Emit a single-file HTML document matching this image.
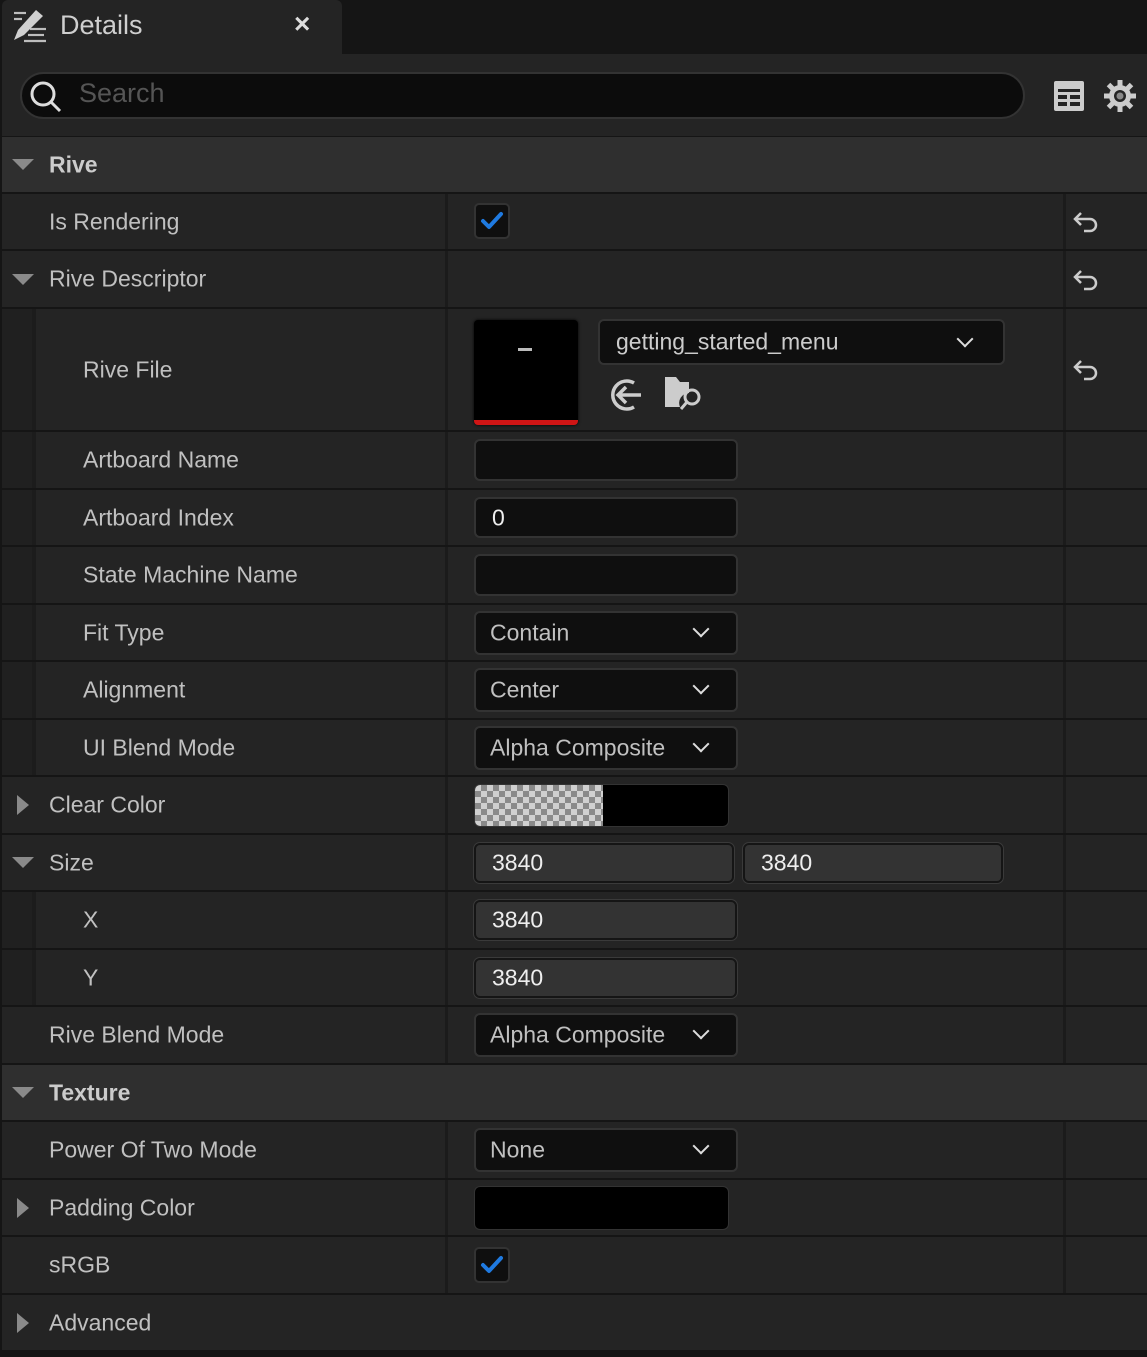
<!DOCTYPE html>
<html><head><meta charset="utf-8"><style>
*{box-sizing:border-box;margin:0;padding:0}
body{width:1147px;height:1357px;background:#151515;position:relative;overflow:hidden;font-family:"Liberation Sans",sans-serif;color:#c0c0c0;font-size:23px}
.a{position:absolute}
.row{position:absolute;left:2px;width:1145px;background:#242424}
.hdr{background:#2f2f2f}
.lbl{position:absolute;top:50%;transform:translateY(-50%);white-space:nowrap}
.c1{position:absolute;left:443px;top:0;bottom:0;width:3px;background:#1b1b1b}
.c2{position:absolute;left:1061px;top:0;bottom:0;width:3px;background:#1b1b1b}
.ind{position:absolute;left:0;top:0;bottom:0;width:34px;background:#202020;border-right:4px solid #1c1c1c}
.box{position:absolute;background:#0f0f0f;border:2px solid #333;border-radius:6px}
.num{position:absolute;background:#333;border:2px solid #151515;border-radius:6px;box-shadow:0 0 0 1px #3a3a3a;color:#eee}
.tri-d{position:absolute;width:0;height:0;border-left:11px solid transparent;border-right:11px solid transparent;border-top:11px solid #8a8a8a}
.tri-r{position:absolute;width:0;height:0;border-top:10px solid transparent;border-bottom:10px solid transparent;border-left:12px solid #8a8a8a}
.chev{position:absolute;width:12px;height:12px;border-right:2.5px solid #ddd;border-bottom:2.5px solid #ddd;transform:rotate(45deg)}
.chk{position:absolute;width:36px;height:36px;background:#0f0f0f;border:2px solid #333;border-radius:5px}
</style></head><body>

<div class="a" style="left:2px;top:0;width:340px;height:54px;background:#242424;border-radius:6px 6px 0 0"></div>
<svg class="a" style="left:12px;top:9px" width="36" height="34" viewBox="0 0 36 34">
<g stroke="#bdbdbd" stroke-width="2.2" fill="none"><line x1="2" y1="4" x2="14" y2="4"/><line x1="2" y1="10" x2="10" y2="10"/><line x1="18" y1="20" x2="34" y2="20"/><line x1="16" y1="26" x2="32" y2="26"/><line x1="12" y1="32" x2="34" y2="32"/></g>
<path d="M24 1 L31 7 L12 26 L2 31 L6 21 Z" fill="#d0d0d0"/></svg>
<div class="a" style="left:60px;top:10px;font-size:27px;color:#cfcfcf">Details</div>
<div class="a" style="left:294px;top:8px;font-size:28px;color:#ddd;font-weight:bold">×</div>

<div class="a" style="left:2px;top:54px;width:1145px;height:82px;background:#242424"></div>
<div class="a" style="left:20px;top:72px;width:1005px;height:47px;background:#0c0c0c;border:2px solid #333;border-radius:24px"></div>
<svg class="a" style="left:28px;top:79px" width="36" height="36" viewBox="0 0 36 36"><circle cx="15" cy="15" r="11" stroke="#ddd" stroke-width="3" fill="none"/><line x1="23" y1="23" x2="32" y2="32" stroke="#ddd" stroke-width="3"/></svg>
<div class="a" style="left:79px;top:78px;font-size:27px;color:#555">Search</div>
<svg class="a" style="left:1053px;top:80px" width="32" height="32" viewBox="0 0 32 32"><rect x="1" y="1" width="30" height="30" rx="2" fill="#ccc"/><rect x="5" y="9" width="22" height="3" fill="#242424"/><rect x="5" y="15" width="9" height="4" fill="#242424"/><rect x="17" y="15" width="10" height="4" fill="#242424"/><rect x="5" y="22" width="9" height="4" fill="#242424"/><rect x="17" y="22" width="10" height="4" fill="#242424"/></svg>
<svg class="a" style="left:1102px;top:78px" width="36" height="36" viewBox="0 0 36 36"><g fill="#ccc"><circle cx="18" cy="18" r="11"/><g stroke="#ccc" stroke-width="5"><line x1="18" y1="2" x2="18" y2="34"/><line x1="2" y1="18" x2="34" y2="18"/><line x1="6.5" y1="6.5" x2="29.5" y2="29.5"/><line x1="29.5" y1="6.5" x2="6.5" y2="29.5"/></g></g><circle cx="18" cy="18" r="6" fill="#242424"/><circle cx="18" cy="18" r="3.5" fill="#888"/></svg>

<div class="row hdr" style="top:137px;height:55px"><div class="tri-d" style="left:10px;top:22px"></div><div class="lbl" style="left:47px;font-weight:bold;color:#ccc">Rive</div></div>

<div class="row" style="top:194px;height:55px"><div class="lbl" style="left:47px">Is Rendering</div><div class="c1"></div><div class="c2"></div>
<div class="chk" style="left:472px;top:9px"><svg width="32" height="32" viewBox="0 0 32 32"><path d="M7 16 L13 22 L25 9" stroke="#1f7ae0" stroke-width="4" fill="none" stroke-linecap="round" stroke-linejoin="round"/></svg></div></div>

<div class="row" style="top:251px;height:56px"><div class="tri-d" style="left:10px;top:23px"></div><div class="lbl" style="left:47px">Rive Descriptor</div><div class="c1"></div><div class="c2"></div></div>

<div class="row" style="top:309px;height:121px"><div class="ind"></div><div class="lbl" style="left:81px">Rive File</div><div class="c1"></div><div class="c2"></div>
<div class="a" style="left:472px;top:11px;width:104px;height:105px;background:#000;border-radius:4px;border-bottom:5px solid #d01515;box-shadow:0 0 3px #000"><div class="a" style="left:44px;top:28px;width:14px;height:3px;background:#bbb"></div></div>
<div class="box" style="left:596px;top:10px;width:407px;height:46px"><div class="lbl" style="left:16px;color:#ccc">getting_started_menu</div><div class="chev" style="left:359px;top:12px"></div></div>
<svg class="a" style="left:606px;top:68px" width="38" height="36" viewBox="0 0 38 36"><path d="M26 6 A14 14 0 1 0 26 30" stroke="#ccc" stroke-width="3.5" fill="none"/><path d="M10 18 H33 M18 10 L10 18 L18 26" stroke="#ccc" stroke-width="3.5" fill="none"/></svg>
<svg class="a" style="left:662px;top:66px" width="40" height="38" viewBox="0 0 40 38"><path d="M1 2 H12 L16 7 H25 V18 A10 10 0 0 0 16 32 H1 Z" fill="#ccc"/><circle cx="28" cy="22" r="7" stroke="#ccc" stroke-width="3" fill="none"/><line x1="23" y1="27" x2="17" y2="34" stroke="#ccc" stroke-width="3"/></svg>
</div>

<div class="row" style="top:432px;height:56px"><div class="ind"></div><div class="lbl" style="left:81px">Artboard Name</div><div class="c1"></div><div class="c2"></div><div class="box" style="left:472px;top:7px;width:264px;height:42px"></div></div>
<div class="row" style="top:490px;height:55px"><div class="ind"></div><div class="lbl" style="left:81px">Artboard Index</div><div class="c1"></div><div class="c2"></div><div class="box" style="left:472px;top:7px;width:264px;height:41px"><div class="lbl" style="left:16px;color:#eee">0</div></div></div>
<div class="row" style="top:547px;height:56px"><div class="ind"></div><div class="lbl" style="left:81px">State Machine Name</div><div class="c1"></div><div class="c2"></div><div class="box" style="left:472px;top:7px;width:264px;height:42px"></div></div>
<div class="row" style="top:605px;height:55px"><div class="ind"></div><div class="lbl" style="left:81px">Fit Type</div><div class="c1"></div><div class="c2"></div><div class="box" style="left:472px;top:6px;width:264px;height:44px"><div class="lbl" style="left:14px">Contain</div><div class="chev" style="left:219px;top:10px"></div></div></div>
<div class="row" style="top:662px;height:56px"><div class="ind"></div><div class="lbl" style="left:81px">Alignment</div><div class="c1"></div><div class="c2"></div><div class="box" style="left:472px;top:6px;width:264px;height:44px"><div class="lbl" style="left:14px">Center</div><div class="chev" style="left:219px;top:10px"></div></div></div>
<div class="row" style="top:720px;height:55px"><div class="ind"></div><div class="lbl" style="left:81px">UI Blend Mode</div><div class="c1"></div><div class="c2"></div><div class="box" style="left:472px;top:6px;width:264px;height:44px"><div class="lbl" style="left:14px">Alpha Composite</div><div class="chev" style="left:219px;top:10px"></div></div></div>

<div class="row" style="top:777px;height:56px"><div class="tri-r" style="left:15px;top:18px"></div><div class="lbl" style="left:47px">Clear Color</div><div class="c1"></div><div class="c2"></div>
<div class="a" style="left:472px;top:7px;width:255px;height:43px;border-radius:6px;overflow:hidden;background:#000;border:1px solid #333"><div class="a" style="left:0;top:0;width:128px;height:43px;background-color:#d0d0d0;background-image:linear-gradient(45deg,#8a8a8a 25%,transparent 25%,transparent 75%,#8a8a8a 75%),linear-gradient(45deg,#8a8a8a 25%,transparent 25%,transparent 75%,#8a8a8a 75%);background-size:12px 12px;background-position:0 0,6px 6px"></div></div></div>

<div class="row" style="top:835px;height:55px"><div class="tri-d" style="left:10px;top:22px"></div><div class="lbl" style="left:47px">Size</div><div class="c1"></div><div class="c2"></div>
<div class="num" style="left:472px;top:8px;width:260px;height:40px"><div class="lbl" style="left:16px">3840</div></div>
<div class="num" style="left:741px;top:8px;width:260px;height:40px"><div class="lbl" style="left:16px">3840</div></div></div>
<div class="row" style="top:892px;height:56px"><div class="ind"></div><div class="lbl" style="left:81px">X</div><div class="c1"></div><div class="c2"></div><div class="num" style="left:472px;top:8px;width:263px;height:40px"><div class="lbl" style="left:16px">3840</div></div></div>
<div class="row" style="top:950px;height:55px"><div class="ind"></div><div class="lbl" style="left:81px">Y</div><div class="c1"></div><div class="c2"></div><div class="num" style="left:472px;top:8px;width:263px;height:40px"><div class="lbl" style="left:16px">3840</div></div></div>
<div class="row" style="top:1007px;height:56px"><div class="lbl" style="left:47px">Rive Blend Mode</div><div class="c1"></div><div class="c2"></div><div class="box" style="left:472px;top:6px;width:264px;height:44px"><div class="lbl" style="left:14px">Alpha Composite</div><div class="chev" style="left:219px;top:10px"></div></div></div>

<div class="row hdr" style="top:1065px;height:55px"><div class="tri-d" style="left:10px;top:22px"></div><div class="lbl" style="left:47px;font-weight:bold;color:#ccc">Texture</div></div>

<div class="row" style="top:1122px;height:56px"><div class="lbl" style="left:47px">Power Of Two Mode</div><div class="c1"></div><div class="c2"></div><div class="box" style="left:472px;top:6px;width:264px;height:44px"><div class="lbl" style="left:14px">None</div><div class="chev" style="left:219px;top:10px"></div></div></div>
<div class="row" style="top:1180px;height:55px"><div class="tri-r" style="left:15px;top:18px"></div><div class="lbl" style="left:47px">Padding Color</div><div class="c1"></div><div class="c2"></div><div class="a" style="left:472px;top:6px;width:255px;height:44px;border-radius:6px;background:#000;border:1px solid #333"></div></div>
<div class="row" style="top:1237px;height:56px"><div class="lbl" style="left:47px">sRGB</div><div class="c1"></div><div class="c2"></div>
<div class="chk" style="left:472px;top:10px"><svg width="32" height="32" viewBox="0 0 32 32"><path d="M7 16 L13 22 L25 9" stroke="#1f7ae0" stroke-width="4" fill="none" stroke-linecap="round" stroke-linejoin="round"/></svg></div></div>
<div class="row" style="top:1295px;height:55px"><div class="tri-r" style="left:15px;top:18px"></div><div class="lbl" style="left:47px">Advanced</div></div>

<svg class="a" style="left:1072px;top:210px" width="28" height="24" viewBox="0 0 28 24"><path d="M9 3 L3 9 L9 15 M3 9 H18 A6 6 0 0 1 18 21 H12" stroke="#ccc" stroke-width="2.5" fill="none"/></svg>
<svg class="a" style="left:1072px;top:268px" width="28" height="24" viewBox="0 0 28 24"><path d="M9 3 L3 9 L9 15 M3 9 H18 A6 6 0 0 1 18 21 H12" stroke="#ccc" stroke-width="2.5" fill="none"/></svg>
<svg class="a" style="left:1072px;top:358px" width="28" height="24" viewBox="0 0 28 24"><path d="M9 3 L3 9 L9 15 M3 9 H18 A6 6 0 0 1 18 21 H12" stroke="#ccc" stroke-width="2.5" fill="none"/></svg>
</body></html>
